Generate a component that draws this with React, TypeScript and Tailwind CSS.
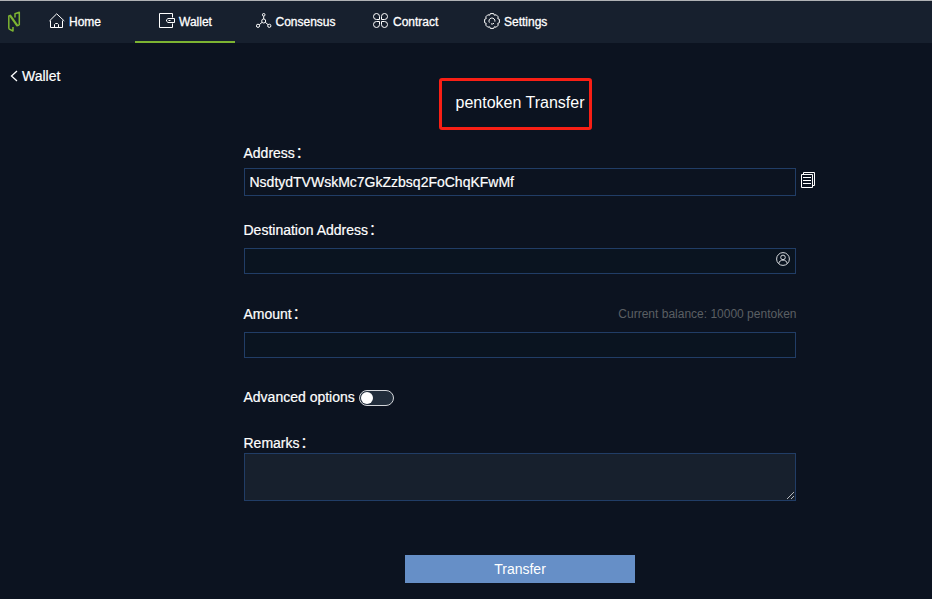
import type { ReactNode } from "react";

const stroke = { fill: "none", stroke: "currentColor", strokeWidth: 1 } as const;

function Logo() {
  return (
    <svg width="14" height="22" viewBox="0 0 14 22" className="text-[#7db432]" {...stroke} strokeWidth={1.5} strokeLinejoin="round">
      <path d="M1.8 17.8V5L4 4.2M12.3 14V1.3L8 2.7V6.5M1.8 17.8L6 20V16M9.8 14.9L12.3 14" />
      <path d="M3.4 4.8L10.4 14.8" strokeWidth={2.2} />
    </svg>
  );
}

function HomeIcon() {
  return (
    <svg width="16" height="16" viewBox="0 0 16 16" {...stroke}>
      <path d="M0.4 8L7.7 0.8L15.3 8M1.5 7.5V14.5H13.5V7.5M5.5 14.5V11.5L6.5 10.5H8.5L9.5 11.5V14.5" />
    </svg>
  );
}

function WalletIcon() {
  return (
    <svg width="16" height="16" viewBox="0 0 16 16" {...stroke}>
      <path d="M13.5 4.5V0.5H0.5V14.5H13.5V10.5M15.5 5.5H9L7.5 6.8V8.2L9 9.5H15.5Z" />
      <path d="M9.5 7.5h2" />
    </svg>
  );
}

function ConsensusIcon() {
  return (
    <svg width="16" height="16" viewBox="0 0 16 16" {...stroke}>
      <circle cx="7.7" cy="1.8" r="1.3" />
      <circle cx="7.7" cy="8" r="2" />
      <circle cx="2" cy="12.8" r="1.6" />
      <circle cx="13.3" cy="12.8" r="1.6" />
      <path d="M7.7 3.2V6M6.1 9.3L3.3 11.7M9.3 9.3L12.1 11.7" />
    </svg>
  );
}

function ContractIcon() {
  return (
    <svg width="16" height="16" viewBox="0 0 16 16" {...stroke}>
      <path d="M6.5 6.5H3.5A3 3 0 1 1 6.5 3.5ZM8.5 6.5V3.5A3 3 0 1 1 11.5 6.5ZM6.5 8.5V11.5A3 3 0 1 1 3.5 8.5ZM8.5 8.5H11.5A3 3 0 1 1 8.5 11.5Z" />
    </svg>
  );
}

function SettingsIcon() {
  return (
    <svg width="16" height="16" viewBox="0 0 16 16" {...stroke}>
      <path d="M6.3 0.6H9.7L10.3 2.2L12.2 1.8L14.2 3.8L13.8 5.7L15.4 6.3V9.7L13.8 10.3L14.2 12.2L12.2 14.2L10.3 13.8L9.7 15.4H6.3L5.7 13.8L3.8 14.2L1.8 12.2L2.2 10.3L0.6 9.7V6.3L2.2 5.7L1.8 3.8L3.8 1.8L5.7 2.2Z" strokeLinejoin="round" />
      <path d="M5.4 9.6A3 3 0 1 1 10.9 8.6M7 10.9A3 3 0 0 0 10 10.2" />
    </svg>
  );
}

function CopyIcon() {
  return (
    <svg width="15" height="17" viewBox="0 0 15 17" {...stroke}>
      <path d="M2.5 2V0.5H13.5V13.5H12M0.5 2.5H11.5V15.5H0.5ZM2 5.5H10M2 8.5H10M2 11.5H10" />
    </svg>
  );
}

function ContactIcon() {
  return (
    <svg width="14" height="14" viewBox="0 0 14 14" className="text-[#d5d8dc]" {...stroke}>
      <circle cx="7" cy="7" r="6.4" />
      <circle cx="7" cy="5.4" r="2.3" />
      <path d="M2.8 11.7C3.2 9.3 4.6 8.1 7 8.1S10.8 9.3 11.2 11.7" />
    </svg>
  );
}

function NavItem({ icon, label, className }: { icon: ReactNode; label: string; className: string }) {
  return (
    <a className={`flex h-[42px] items-center gap-1 text-xs ${className}`}>
      <span className="pb-0.5">{icon}</span>
      <span className="[-webkit-text-stroke:0.3px_white]">{label}</span>
    </a>
  );
}

function Label({ text, colon = true }: { text: string; colon?: boolean }) {
  return (
    <label className="-ml-[0.5px] flex h-5 text-sm leading-5 [-webkit-text-stroke:0.2px_white]">
      {text}
      {colon && <span className="-mt-px ml-px">：</span>}
    </label>
  );
}

export default function App() {
  return (
    <div className="h-[599px] w-[932px] overflow-hidden bg-[#0c1320] font-['Liberation_Sans','Noto_Sans_CJK_SC',sans-serif] text-white">
      <header className="flex h-[43px] border-t border-[#b0b2b5] bg-[#17202e] pl-[7px]">
        <div className="mr-7 flex items-center">
          <Logo />
        </div>
        <NavItem icon={<HomeIcon />} label="Home" className="w-[86px]" />
        <NavItem icon={<WalletIcon />} label="Wallet" className="w-[100px] border-b-2 border-[#7db432] pl-6 pt-0.5" />
        <NavItem icon={<ConsensusIcon />} label="Consensus" className="w-[138px] pl-[20.5px]" />
        <NavItem icon={<ContractIcon />} label="Contract" className="w-[111px]" />
        <NavItem icon={<SettingsIcon />} label="Settings" className="" />
      </header>

      <div className="flex h-[35px] items-end pl-2.5">
        <a className="-mb-2 flex h-5 items-center gap-1 text-sm [-webkit-text-stroke:0.2px_white]">
          <svg width="8" height="12" viewBox="0 0 8 12" {...stroke} strokeWidth={1.3}>
            <path d="M7 1L1.5 6L7 11" />
          </svg>
          Wallet
        </a>
      </div>

      <h1 className="ml-[439px] flex h-[52px] w-[153px] items-center justify-end whitespace-nowrap rounded-[3px] border-3 border-[#f91f15] pb-0.5 pr-[4.5px] text-base">
        pentoken Transfer
      </h1>

      <form className="ml-[244px] w-[572px] pt-[13px]">
        <Label text="Address" />
        <div className="mt-[5px] flex gap-[5px]">
          <input className="h-7 w-[552px] border border-[#213d66] bg-[#0c1320] px-[4.5px] text-sm [-webkit-text-stroke:0.2px_white]" defaultValue="NsdtydTVWskMc7GkZzbsq2FoChqKFwMf" />
          <span className="pt-1"><CopyIcon /></span>
        </div>
        <div className="mt-6">
          <Label text="Destination Address" />
        </div>
        <div className="mt-2 flex h-[26px] w-[552px] items-center border border-[#213d66] bg-[#0a1420] pb-1 pr-[5px]">
          <input className="min-w-0 flex-1 bg-transparent text-sm" />
          <ContactIcon />
        </div>
        <div className="mt-[30px] flex w-[552.5px] justify-between">
          <Label text="Amount" />
          <span className="text-xs leading-5 text-[#5b5f63]">Current balance: 10000 pentoken</span>
        </div>
        <input className="mt-2 block h-[26px] w-[552px] border border-[#213d66] bg-[#0a1420] px-[5px] text-sm" />
        <div className="mt-[29px] flex h-[22px] gap-1">
          <Label text="Advanced options" colon={false} />
          <span className="mt-[3px] flex h-4 w-[35px] items-center rounded-full border border-[#d3d5d9] bg-[#222d3b] pl-px">
            <span className="size-3 rounded-full bg-white" />
          </span>
        </div>
        <div className="mt-6">
          <Label text="Remarks" />
        </div>
        <div className="flex h-12 w-[552px] items-end justify-end border border-[#213d66] bg-[#17202d]">
          <svg width="9" height="9" viewBox="0 0 9 9" className="text-[#b5b8bc]" {...stroke}>
            <path d="M1 8L8 1M5 8L8 5" />
          </svg>
        </div>
        <button className="ml-[161px] mt-[54px] block h-7 w-[230px] bg-[#668fc7] text-sm">Transfer</button>
      </form>
    </div>
  );
}
